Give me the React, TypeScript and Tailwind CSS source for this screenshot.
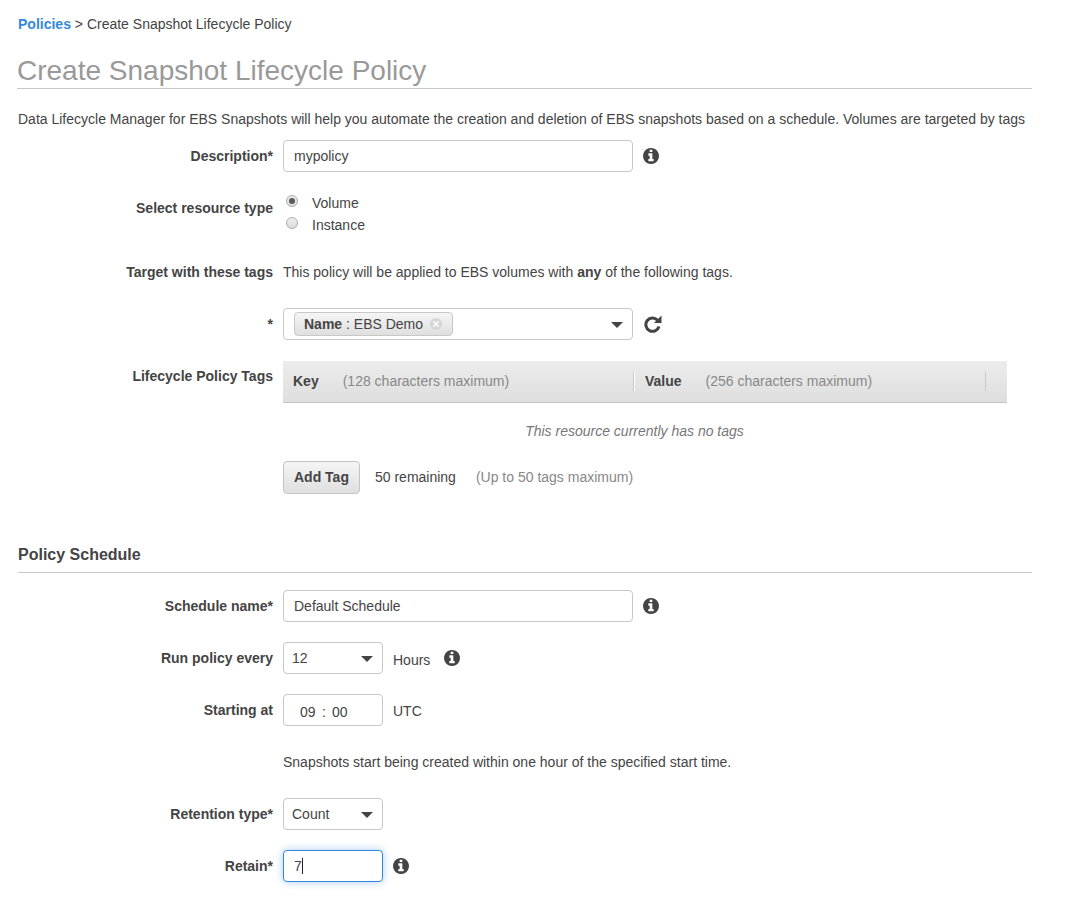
import { useState, type ReactNode } from "react";

const FIELD =
  "h-8 rounded-[4px] border border-[#c8c8c8] bg-white text-sm text-[#444] outline-none";

function InfoButton({ label }: { label: string }) {
  return (
    <button type="button" aria-label={label} className="shrink-0">
      <svg viewBox="128 128 1536 1536" className="block size-4" fill="#444" aria-hidden="true">
        <path d="M1152 1376v-160q0-14-9-23t-23-9h-96v-512q0-14-9-23t-23-9h-320q-14 0-23 9t-9 23v160q0 14 9 23t23 9h96v320h-96q-14 0-23 9t-9 23v160q0 14 9 23t23 9h448q14 0 23-9t9-23zm-128-896v-160q0-14-9-23t-23-9h-192q-14 0-23 9t-9 23v160q0 14 9 23t23 9h192q14 0 23-9t9-23zm640 416q0 209-103 385.500t-279.500 279.500-385.500 103-385.500-103-279.500-279.500-103-385.500 103-385.500 279.500-279.500 385.500-103 385.500 103 279.500 279.500 103 385.500z" />
      </svg>
    </button>
  );
}

function RefreshIcon() {
  return (
    <svg viewBox="0 0 18 18" className="block size-[18px]" aria-hidden="true">
      <path d="M13.600 5.200A6.700 6.700 0 1 0 15 11.500" fill="none" stroke="#444" strokeWidth="3" />
      <path d="M17.500 0.500V8H10z" fill="#444" />
    </svg>
  );
}

function Caret() {
  return (
    <svg viewBox="0 0 12 6" className="block h-[6px] w-3" fill="#444" aria-hidden="true">
      <path d="M0 0h12L6 6z" />
    </svg>
  );
}

function Row({ label, htmlFor, children }: { label: string; htmlFor?: string; children: ReactNode }) {
  return (
    <div className="flex gap-[10px]">
      <label htmlFor={htmlFor} className="w-64 shrink-0 text-right leading-8 font-bold">
        {label}
      </label>
      {children}
    </div>
  );
}

function SelectBox({ id, options }: { id: string; options: string[] }) {
  return (
    <div className="relative w-[100px]">
      <select id={id} className={`${FIELD} w-full appearance-none pr-6 pl-2`}>
        {options.map((o) => (
          <option key={o}>{o}</option>
        ))}
      </select>
      <span className="pointer-events-none absolute top-[14px] right-[10px]">
        <Caret />
      </span>
    </div>
  );
}

export default function App() {
  const [resource, setResource] = useState("Volume");

  return (
    <main className="pt-[14px] pr-[37px] pb-10 pl-[17px] font-['Liberation_Sans',Arial,sans-serif] text-sm leading-5 text-[#444]">
      <nav className="pl-px">
        <a href="#policies" className="font-bold text-[#38d]">
          Policies
        </a>{" "}
        &gt; Create Snapshot Lifecycle Policy
      </nav>

      <h1 className="mt-5 border-b border-[#c8c8c8] text-[28px] leading-[34px] text-[#999]">
        Create Snapshot Lifecycle Policy
      </h1>

      <p className="mt-5 pl-px">
        Data Lifecycle Manager for EBS Snapshots will help you automate the creation and deletion of
        EBS snapshots based on a schedule. Volumes are targeted by tags
      </p>

      <form className="mt-[11px]" onSubmit={(e) => e.preventDefault()}>
        <div className="flex flex-col gap-5">
          <Row label="Description*" htmlFor="description">
            <div className="flex items-center gap-[10px]">
              <input id="description" defaultValue="mypolicy" className={`${FIELD} w-[350px] px-[10px]`} />
              <InfoButton label="About description" />
            </div>
          </Row>

          <div role="radiogroup" aria-labelledby="resource-label" className="flex gap-[10px]">
            <span id="resource-label" className="w-64 shrink-0 text-right leading-8 font-bold">
              Select resource type
            </span>
            <div className="pl-[3px]">
              {["Volume", "Instance"].map((name) => (
                <label key={name} className="flex items-start gap-[14px] leading-[22px]">
                  <input
                    type="radio"
                    name="resource"
                    checked={resource === name}
                    onChange={() => setResource(name)}
                    className="mt-[3px] grid size-3 appearance-none place-items-center rounded-full border border-[#adadad] bg-linear-to-b from-[#eee] to-[#dcdcdc] before:size-[6px] before:rounded-full checked:before:bg-[#5a5a5a]"
                  />
                  {name}
                </label>
              ))}
            </div>
          </div>

          <Row label="Target with these tags" htmlFor="target-tags">
            <p className="leading-8">
              This policy will be applied to EBS volumes with <b>any</b> of the following tags.
            </p>
          </Row>

          <Row label="*" htmlFor="target-tags">
            <div className="flex items-center gap-[11px]">
              <div className={`${FIELD} flex w-[350px] items-center justify-between pr-[9px] pl-[10px]`}>
                <span className="flex h-6 items-center rounded-[4px] border border-[#c8c8c8] bg-linear-to-b from-[#f5f5f5] to-[#dfdfdf] pr-[10px] pl-[9px]">
                  <span>
                    <b>Name</b> : EBS Demo
                  </span>
                  <button type="button" aria-label="Remove tag" className="ml-[7px]">
                    <svg viewBox="0 0 12 12" className="block size-3" aria-hidden="true">
                      <circle cx="6" cy="6" r="6" fill="#d6d6d6" />
                      <path d="M3.300 3.300l5.400 5.400M8.700 3.300l-5.400 5.400" stroke="#fff" strokeWidth="1.400" />
                    </svg>
                  </button>
                </span>
                <button id="target-tags" type="button" aria-label="Show tags" className="pt-px">
                  <Caret />
                </button>
              </div>
              <button type="button" aria-label="Refresh tags">
                <RefreshIcon />
              </button>
            </div>
          </Row>

          <div className="flex gap-[10px]">
            <span id="tags-label" className="w-64 shrink-0 text-right leading-8 font-bold">
              Lifecycle Policy Tags
            </span>
            <div className="max-w-[724px] grow pt-px">
              <table
                aria-labelledby="tags-label"
                className="w-full table-fixed border-separate border-spacing-0"
              >
                <thead className="leading-[19px]">
                  <tr className="h-[42px] bg-linear-to-b from-[#ececec] to-[#dedede] text-left">
                    <th className="w-[351px] border-b border-[#c4c4c4] p-0 font-normal">
                      <div className="flex gap-6 border-r border-[#c8c8c8] pl-[10px]">
                        <b>Key</b>
                        <span className="text-[#888]">(128 characters maximum)</span>
                      </div>
                    </th>
                    <th className="border-b border-[#c4c4c4] p-0 font-normal">
                      <div className="flex gap-6 border-r border-l border-r-[#c8c8c8] border-l-white pl-[10px]">
                        <b>Value</b>
                        <span className="text-[#888]">(256 characters maximum)</span>
                      </div>
                    </th>
                    <th className="w-[21px] border-b border-[#c4c4c4] p-0" />
                  </tr>
                </thead>
                <tbody>
                  <tr className="h-14">
                    <td colSpan={2} className="p-0 text-center text-[#777] italic">
                      This resource currently has no tags
                    </td>
                    <td />
                  </tr>
                </tbody>
              </table>
              <div className="mt-[2px] flex items-start leading-8">
                <button
                  type="button"
                  className="h-[33px] rounded-[4px] border border-[#c4c4c4] bg-linear-to-b from-[#f5f5f5] to-[#dfdfdf] px-[10px] pb-px leading-[30px] font-bold"
                >
                  Add Tag
                </button>
                <span className="ml-[15px]">50 remaining</span>
                <span className="ml-5 text-[#888]">(Up to 50 tags maximum)</span>
              </div>
            </div>
          </div>
        </div>

        <h2 className="mt-[51px] mb-[17px] ml-px border-b border-[#c8c8c8] pb-[7px] text-base leading-5 font-bold">
          Policy Schedule
        </h2>

        <div className="flex flex-col gap-5">
          <Row label="Schedule name*" htmlFor="schedule-name">
            <div className="flex items-center gap-[10px]">
              <input id="schedule-name" defaultValue="Default Schedule" className={`${FIELD} w-[350px] px-[10px]`} />
              <InfoButton label="About schedule name" />
            </div>
          </Row>

          <Row label="Run policy every" htmlFor="interval">
            <div className="flex items-center gap-[10px]">
              <SelectBox id="interval" options={["12", "24"]} />
              <span className="pt-1">Hours</span>
              <span className="flex pl-1">
                <InfoButton label="About interval" />
              </span>
            </div>
          </Row>

          <Row label="Starting at" htmlFor="start-hour">
            <div className="flex items-center gap-[10px]">
              <div className={`${FIELD} flex w-[100px] items-center pt-[3px] pl-4`}>
                <input id="start-hour" defaultValue="09" className="w-4 outline-none" />
                <span className="w-4 text-center">:</span>
                <input aria-label="Start minute" defaultValue="00" className="w-4 outline-none" />
              </div>
              <span className="pt-px">UTC</span>
            </div>
          </Row>

          <p className="pl-[266px] leading-8">
            Snapshots start being created within one hour of the specified start time.
          </p>

          <Row label="Retention type*" htmlFor="retention">
            <SelectBox id="retention" options={["Count", "Age"]} />
          </Row>

          <Row label="Retain*" htmlFor="retain">
            <div className="flex items-center gap-[10px]">
              <div className="relative">
                <input
                  id="retain"
                  defaultValue="7"
                  className="block h-8 w-[100px] rounded-[4px] border border-[#38d] bg-white px-[10px] text-sm text-[#444] shadow-[0_0_8px_rgba(51,136,221,0.4)] outline-none"
                />
                <span className="pointer-events-none absolute top-2 left-[19px] h-4 w-px bg-[#222]" />
              </div>
              <InfoButton label="About retain" />
            </div>
          </Row>
        </div>
      </form>
    </main>
  );
}
